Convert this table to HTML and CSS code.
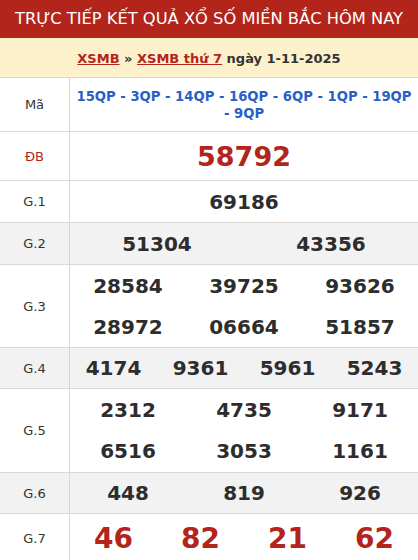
FILE: index.html
```html
<!DOCTYPE html>
<html lang="vi">
<head>
<meta charset="utf-8">
<title>XSMB</title>
<link rel="stylesheet" href="styles.css">
</head>
<body>
<div class="box">
  <h1 class="title">TRỰC TIẾP KẾT QUẢ XỔ SỐ MIỀN BẮC HÔM NAY</h1>
  <div class="sub"><a href="#">XSMB</a> » <a href="#">XSMB thứ 7</a> ngày 1-11-2025</div>
  <div class="table">
    <div class="row r-ma">
      <div class="lbl">Mã</div>
      <div class="val ma">15QP - 3QP - 14QP - 16QP - 6QP - 1QP - 19QP -&nbsp;9QP</div>
    </div>
    <div class="row r-db">
      <div class="lbl red">ĐB</div>
      <div class="val nums c1"><span class="big red">58792</span></div>
    </div>
    <div class="row r-1">
      <div class="lbl">G.1</div>
      <div class="val nums c1"><span>69186</span></div>
    </div>
    <div class="row r-1 gray">
      <div class="lbl">G.2</div>
      <div class="val nums c2"><span>51304</span><span>43356</span></div>
    </div>
    <div class="row r-2">
      <div class="lbl">G.3</div>
      <div class="val nums c3"><span>28584</span><span>39725</span><span>93626</span><span>28972</span><span>06664</span><span>51857</span></div>
    </div>
    <div class="row r-1s gray">
      <div class="lbl">G.4</div>
      <div class="val nums c4"><span>4174</span><span>9361</span><span>5961</span><span>5243</span></div>
    </div>
    <div class="row r-2b">
      <div class="lbl">G.5</div>
      <div class="val nums c3"><span>2312</span><span>4735</span><span>9171</span><span>6516</span><span>3053</span><span>1161</span></div>
    </div>
    <div class="row r-1s gray">
      <div class="lbl">G.6</div>
      <div class="val nums c3"><span>448</span><span>819</span><span>926</span></div>
    </div>
    <div class="row r-7">
      <div class="lbl">G.7</div>
      <div class="val nums c4"><span class="big red">46</span><span class="big red">82</span><span class="big red">21</span><span class="big red">62</span></div>
    </div>
  </div>
</div>
</body>
</html>
```
FILE: styles.css
```css
* { box-sizing: border-box; }
html, body { margin: 0; padding: 0; background: #fff; }
body { font-family: "DejaVu Sans", sans-serif; color: #333; }
.box { width: 418px; }
.title {
  margin: 0;
  height: 38px;
  background: #b3241b;
  color: #fff;
  font-weight: normal;
  font-size: 16.3px;
  line-height: 38px;
  text-align: center;
  white-space: nowrap;
}
.sub {
  height: 39px;
  background: #fdf1cb;
  text-align: center;
  font-weight: bold;
  font-size: 13px;
  line-height: 41px;
  color: #333;
  white-space: nowrap;
}
.sub a { color: #b3241b; text-decoration: underline; }
.table { border-top: 1px solid #dcd7cf; }
.row {
  display: grid;
  grid-template-columns: 70px 1fr;
  border-bottom: 1px solid #dcd7cf;
}
.row.gray { background: #f2f2f2; }
.lbl {
  border-right: 1px solid #dcd7cf;
  display: flex;
  align-items: center;
  justify-content: center;
  font-size: 13px;
  color: #333;
}
.red { color: #b3241b; }
.val { text-align: center; }
.ma {
  color: #2a5fc8;
  font-weight: bold;
  font-size: 13.2px;
  line-height: 17px;
  padding: 10px 4px 0 4px;
}
.r-ma { height: 54px; }
.r-db { height: 49px; }
.r-1 { height: 42px; }
.r-1s { height: 41px; }
.r-2 { height: 83px; }
.r-2b { height: 84px; }
.r-7 { height: 50px; }
.nums {
  display: grid;
  align-items: center;
  justify-items: center;
  font-weight: bold;
  font-size: 20px;
  color: #2d2d2d;
}
.c1 { grid-template-columns: 1fr; }
.c2 { grid-template-columns: repeat(2, 1fr); }
.c3 { grid-template-columns: repeat(3, 1fr); }
.c4 { grid-template-columns: repeat(4, 1fr); }
.big { font-size: 27px; }
.r-7 .big { font-size: 28px; }
```
